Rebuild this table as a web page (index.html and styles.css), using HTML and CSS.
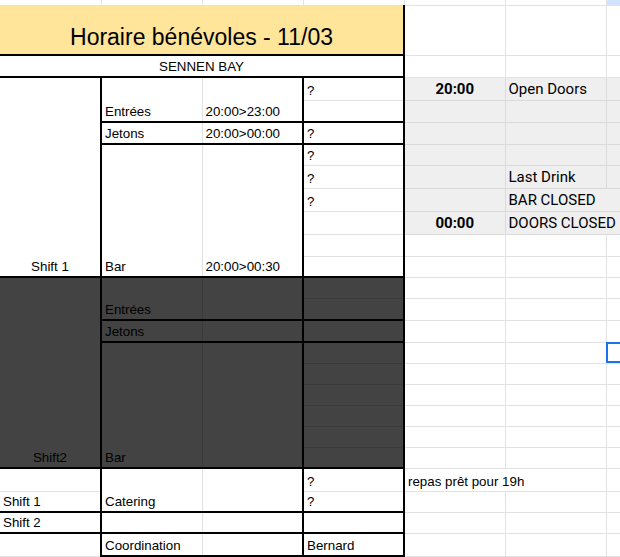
FILE: index.html
```html
<!DOCTYPE html>
<html lang="fr">
<head>
<meta charset="utf-8">
<title>Horaire bénévoles</title>
<link rel="stylesheet" href="styles.css">
</head>
<body>
<table class="sheet">
<colgroup><col class="col"><col class="col"><col class="col"><col class="col"><col class="col"><col class="col"><col class="col"></colgroup>
<tbody>
<tr class="h4 hdr"><td></td><td></td><td></td><td></td><td></td><td></td><td class="hsel"></td></tr>
<tr class="h50"><td colspan="4" class="title kr kb">Horaire bénévoles - 11/03</td><td></td><td></td><td></td></tr>
<tr class="h22"><td colspan="4" class="c kr kb">SENNEN BAY</td><td></td><td></td><td></td></tr>

<tr class="h23">
  <td rowspan="9" class="c kr kb">Shift 1</td>
  <td rowspan="2" class="kb">Entrées</td>
  <td rowspan="2" class="kb kr">20:00&gt;23:00</td>
  <td class="kr">?</td>
  <td class="g r b c">20:00</td>
  <td class="g r">Open Doors</td>
  <td class="g"></td>
</tr>
<tr class="h22"><td class="kr kb"></td><td class="g"></td><td class="g"></td><td class="g"></td></tr>
<tr class="h22">
  <td class="kb">Jetons</td>
  <td class="kb kr">20:00&gt;00:00</td>
  <td class="kr kb">?</td>
  <td class="g"></td><td class="g"></td><td class="g"></td>
</tr>
<tr class="h21">
  <td rowspan="6" class="kb">Bar</td>
  <td rowspan="6" class="kb kr">20:00&gt;00:30</td>
  <td class="kr">?</td>
  <td class="g"></td><td class="g"></td><td class="g"></td>
</tr>
<tr class="h23"><td class="kr">?</td><td class="g"></td><td class="g r">Last Drink</td><td class="g"></td></tr>
<tr class="h23"><td class="kr">?</td><td class="g"></td><td colspan="2" class="g r">BAR CLOSED</td></tr>
<tr class="h23"><td class="kr"></td><td class="g r b c">00:00</td><td colspan="2" class="g r">DOORS CLOSED</td></tr>
<tr class="h22"><td class="kr"></td><td></td><td></td><td></td></tr>
<tr class="h21"><td class="kr kb"></td><td></td><td></td><td></td></tr>

<tr class="h21">
  <td rowspan="9" class="dk c kr kb">Shift2</td>
  <td rowspan="2" class="dk kb">Entrées</td>
  <td rowspan="2" class="dk kb kr"></td>
  <td class="dk kr"></td>
  <td></td><td></td><td></td>
</tr>
<tr class="h22"><td class="dk kr kb"></td><td></td><td></td><td></td></tr>
<tr class="h22">
  <td class="dk kb">Jetons</td>
  <td class="dk kb kr"></td>
  <td class="dk kr kb"></td>
  <td></td><td></td><td></td>
</tr>
<tr class="h21">
  <td rowspan="6" class="dk kb">Bar</td>
  <td rowspan="6" class="dk kb kr"></td>
  <td class="dk kr"></td>
  <td></td><td></td><td class="sel"></td>
</tr>
<tr class="h21"><td class="dk kr"></td><td></td><td></td><td></td></tr>
<tr class="h21"><td class="dk kr"></td><td></td><td></td><td></td></tr>
<tr class="h21"><td class="dk kr"></td><td></td><td></td><td></td></tr>
<tr class="h21"><td class="dk kr"></td><td></td><td></td><td></td></tr>
<tr class="h21"><td class="dk kr kb"></td><td></td><td></td><td></td></tr>

<tr class="h23">
  <td class="kr"></td>
  <td rowspan="2" class="kb">Catering</td>
  <td rowspan="2" class="kb kr"></td>
  <td class="kr">?</td>
  <td colspan="2">repas prêt pour 19h</td>
  <td></td>
</tr>
<tr class="h21"><td class="kr kb">Shift 1</td><td class="kr kb">?</td><td></td><td></td><td></td></tr>
<tr class="h21"><td class="kr kb">Shift 2</td><td class="kb"></td><td class="kb kr"></td><td class="kr kb"></td><td></td><td></td><td></td></tr>
<tr class="h23"><td class="kr"></td><td class="kb">Coordination</td><td class="kb kr"></td><td class="kr kb">Bernard</td><td></td><td></td><td></td></tr>
<tr class="h21"><td></td><td></td><td></td><td></td><td></td><td></td><td></td></tr>
</tbody>
</table>
</body>
</html>
```

FILE: styles.css
```css
html, body {
  margin: 0;
  padding: 0;
  overflow: hidden;
  background: #ffffff;
}

.sheet {
  border-collapse: collapse;
  table-layout: fixed;
  width: 707px;
  border-left: hidden;
  border-top: hidden;
  font-family: "Liberation Sans", Arial, sans-serif;
  font-size: 13.333px;
  color: #000000;
}

.sheet .col { width: 101px; }

.sheet td {
  border: 1px solid #e2e2e2;
  padding: 0 3px 2px 3px;
  vertical-align: bottom;
  white-space: nowrap;
  line-height: 15px;
}

.h4 { height: 5px; }
.h21 { height: 21px; }
.h22 { height: 22px; }
.h23 { height: 23px; }
.h50 { height: 50px; }

.sheet .hdr td { padding: 0; line-height: 0; font-size: 0; background: #ffffff; }
.sheet .hdr .hsel { background: #d3e3fd; }

.sheet td.title {
  background: #ffe599;
  font-size: 23px;
  line-height: 28px;
  text-align: center;
  padding-bottom: 3px;
}

.sheet td.c { text-align: center; }

.sheet td.g { background: #efefef; border-color: #dadada; }
.sheet td.r { font-family: Roboto, "Liberation Sans", sans-serif; font-size: 15px; line-height: 17px; }
.sheet td.b { font-weight: bold; }

.sheet td.dk { background: #434343; border-color: #3a3a3a; }

.sheet td.kr { border-right: 2px solid #000000; }
.sheet td.kb { border-bottom: 2px solid #000000; }

.sheet td.sel { outline: 2px solid #1a73e8; outline-offset: -2px; }
```
